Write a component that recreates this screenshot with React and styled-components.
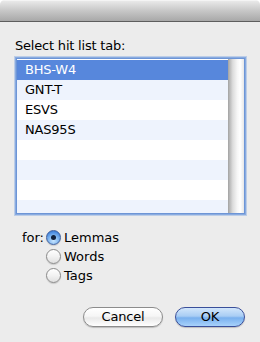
import React, { useState } from "react";
import styled, { createGlobalStyle } from "styled-components";

const Global = createGlobalStyle`
  html, body { margin: 0; padding: 0; background: #ffffff; }
  body { font-family: "DejaVu Sans", "Liberation Sans", sans-serif; }
`;

const Window = styled.div`
  width: 260px;
  height: 342px;
  background: #ececec;
  border-radius: 5px 5px 0 0;
  overflow: hidden;
  display: flex;
  flex-direction: column;
  font-size: 13px;
  color: #000;
`;

const TitleBar = styled.div`
  flex: none;
  height: 22px;
  box-sizing: border-box;
  background: linear-gradient(#e9e9e9, #c9c9c9 45%, #a8a8a8);
  border-top: 1px solid #f4f4f4;
  border-bottom: 1px solid #5e5e5e;
`;

const Content = styled.div`
  flex: 1;
  display: flex;
  flex-direction: column;
  padding: 16px 13px 0 15px;
`;

const Label = styled.div`
  line-height: 16px;
  height: 16px;
  letter-spacing: -0.2px;
`;

const ListFrame = styled.div`
  margin: 5px 3px 0 2px;
  height: 154px;
  display: flex;
  background: #fff;
  box-shadow: 0 0 0 1px #6d95d6, 0 0 0 2px #89abe0, 0 0 0 3px rgba(150, 180, 228, 0.55);
`;

const Rows = styled.div`
  flex: 1;
  overflow: hidden;
  padding-top: 1px;
`;

const Row = styled.div`
  height: 20px;
  line-height: 20px;
  padding-left: 8px;
  letter-spacing: -0.2px;
  background: ${(p) => (p.$selected ? "#5787dc" : p.$odd ? "#eef3fd" : "#ffffff")};
  color: ${(p) => (p.$selected ? "#ffffff" : "#000")};
`;

const Scrollbar = styled.div`
  width: 16px;
  flex: none;
  background: linear-gradient(to right, #b0b0b0, #dcdcdc 25%, #f6f6f6 55%, #ffffff 75%, #e6e6e6);
  border-left: 1px solid #a8a8a8;
  box-sizing: border-box;
`;

const RadioGrid = styled.div`
  margin-top: 17px;
  display: grid;
  grid-template-columns: 29px auto;
  column-gap: 2px;
  row-gap: 4px;
  align-items: center;
`;

const ForLabel = styled.div`
  grid-row: 1;
  grid-column: 1;
  text-align: right;
  padding-left: 4px;
  line-height: 15px;
`;

const RadioRow = styled.label`
  grid-column: 2;
  display: flex;
  align-items: center;
  gap: 3px;
  height: 15px;
  line-height: 15px;
`;

const RadioCircle = styled.span`
  width: 15px;
  height: 15px;
  box-sizing: border-box;
  border-radius: 50%;
  flex: none;
  display: flex;
  align-items: center;
  justify-content: center;
  border: 1px solid ${(p) => (p.$on ? "#3f5f9c" : "#8a8a8a")};
  background: ${(p) =>
    p.$on
      ? "radial-gradient(circle at 50% 75%, #c9e6ff 0%, #7fb5ef 45%, #3f82dc 80%)"
      : "linear-gradient(#ffffff, #f2f2f2 50%, #e0e0e0)"};
  box-shadow: 0 1px 1px rgba(0, 0, 0, 0.15);
`;

const Dot = styled.span`
  width: 5px;
  height: 5px;
  border-radius: 50%;
  background: #10213d;
`;

const ButtonRow = styled.div`
  margin-top: auto;
  margin-bottom: 15px;
  display: flex;
  justify-content: flex-end;
  gap: 12px;
  padding-right: 2px;
`;

const Button = styled.button`
  height: 20px;
  width: ${(p) => p.$w}px;
  border-radius: 10px;
  font-family: inherit;
  font-size: 13px;
  padding: 0;
  color: #000;
  line-height: 18px;
  letter-spacing: -0.2px;
  border: 1px solid ${(p) => (p.$primary ? "#3a4f9a" : "#8c8c8c")};
  background: ${(p) =>
    p.$primary
      ? "linear-gradient(#d2e6fb 0%, #a9cdf4 45%, #79b0ee 55%, #a8d2fb 100%)"
      : "linear-gradient(#ffffff 0%, #f6f6f6 45%, #e9e9e9 55%, #ffffff 100%)"};
  box-shadow: 0 1px 1px rgba(0, 0, 0, 0.2);
`;

const items = ["BHS-W4", "GNT-T", "ESVS", "NAS95S", "", "", "", ""];
const options = ["Lemmas", "Words", "Tags"];

export default function App() {
  const [sel, setSel] = useState(0);
  const [opt, setOpt] = useState(0);
  return (
    <>
      <Global />
      <Window>
        <TitleBar />
        <Content>
          <Label>Select hit list tab:</Label>
          <ListFrame>
            <Rows>
              {items.map((t, i) => (
                <Row key={i} $selected={i === sel} $odd={i % 2 === 1} onClick={() => t && setSel(i)}>
                  {t}
                </Row>
              ))}
            </Rows>
            <Scrollbar />
          </ListFrame>
          <RadioGrid>
            <ForLabel>for:</ForLabel>
            {options.map((o, i) => (
              <RadioRow key={o} onClick={() => setOpt(i)}>
                <RadioCircle $on={opt === i}>{opt === i && <Dot />}</RadioCircle>
                {o}
              </RadioRow>
            ))}
          </RadioGrid>
          <ButtonRow>
            <Button $w={80}>Cancel</Button>
            <Button $w={70} $primary>OK</Button>
          </ButtonRow>
        </Content>
      </Window>
    </>
  );
}
